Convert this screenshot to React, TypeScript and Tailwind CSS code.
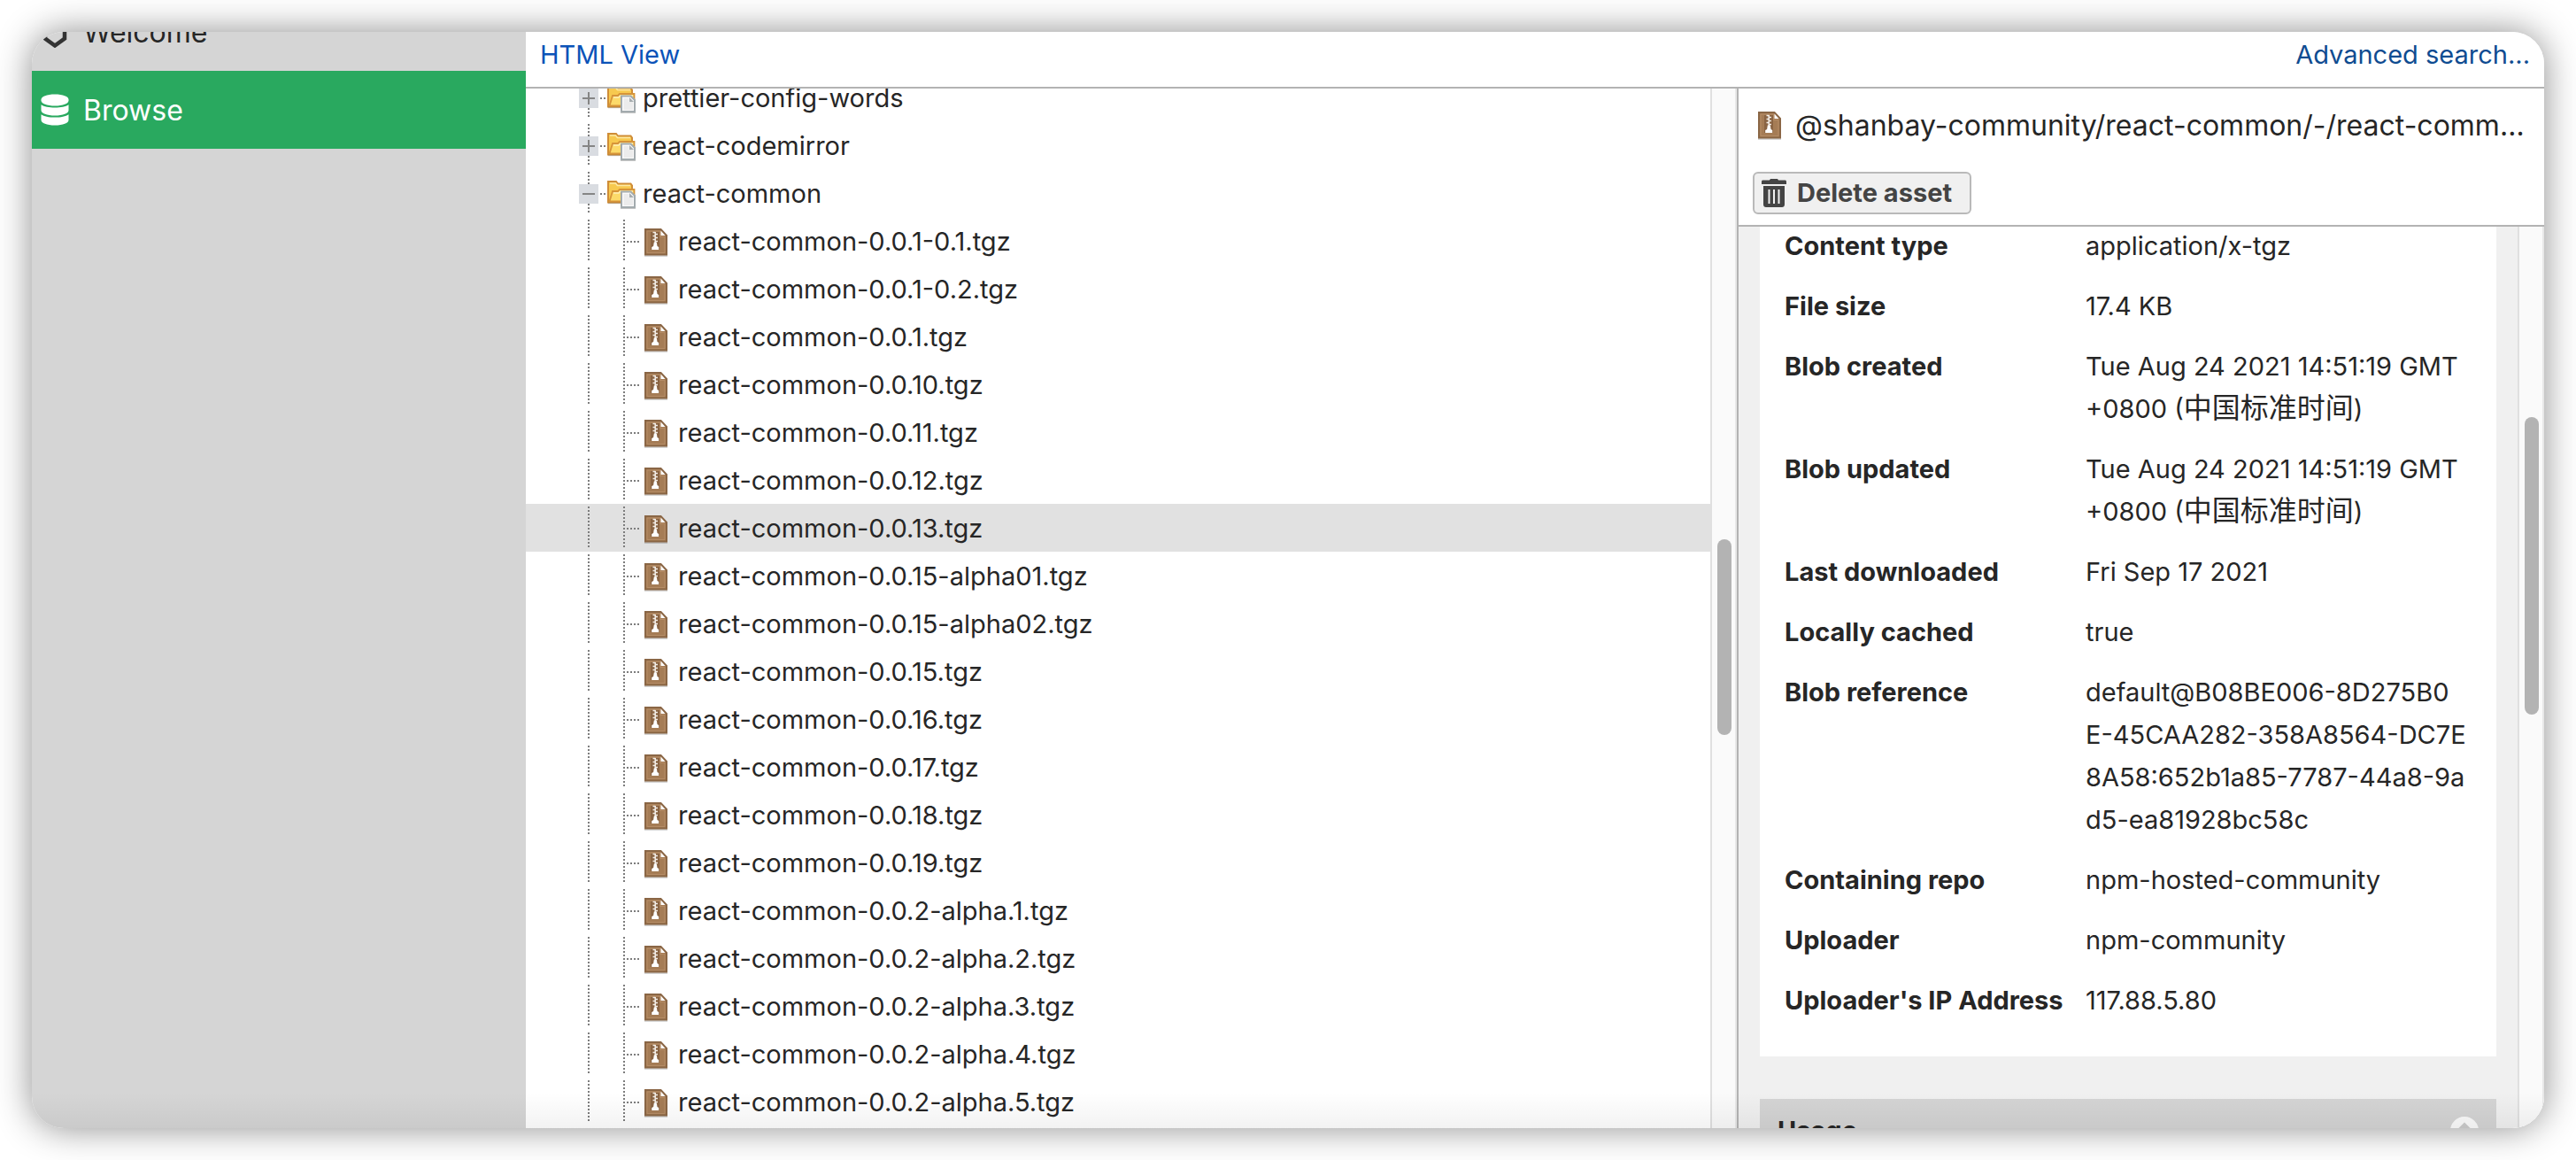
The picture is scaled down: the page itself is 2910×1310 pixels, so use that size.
import React, { useState } from "react";
import clsx from "clsx";

const folders = [
  { name: "prettier-config-words", open: false },
  { name: "react-codemirror", open: false },
  { name: "react-common", open: true },
];

const files = [
  "0.0.1-0.1",
  "0.0.1-0.2",
  "0.0.1",
  "0.0.10",
  "0.0.11",
  "0.0.12",
  "0.0.13",
  "0.0.15-alpha01",
  "0.0.15-alpha02",
  "0.0.15",
  "0.0.16",
  "0.0.17",
  "0.0.18",
  "0.0.19",
  "0.0.2-alpha.1",
  "0.0.2-alpha.2",
  "0.0.2-alpha.3",
  "0.0.2-alpha.4",
  "0.0.2-alpha.5",
].map((version) => `react-common-${version}.tgz`);

const timestamp = (
  <>
    <span className="block">Tue Aug 24 2021 14:51:19 GMT</span>
    <span className="block">
      +0800 (<span className="text-[32px] leading-none">中国标准时间</span>)
    </span>
  </>
);

const details: { label: string; value: React.ReactNode }[] = [
  { label: "Content type", value: "application/x-tgz" },
  { label: "File size", value: "17.4 KB" },
  { label: "Blob created", value: timestamp },
  { label: "Blob updated", value: timestamp },
  { label: "Last downloaded", value: "Fri Sep 17 2021" },
  { label: "Locally cached", value: "true" },
  {
    label: "Blob reference",
    value: (
      <>
        <span className="block">default@B08BE006-8D275B0</span>
        <span className="block">E-45CAA282-358A8564-DC7E</span>
        <span className="block">8A58:652b1a85-7787-44a8-9a</span>
        <span className="block">d5-ea81928bc58c</span>
      </>
    ),
  },
  { label: "Containing repo", value: "npm-hosted-community" },
  { label: "Uploader", value: "npm-community" },
  { label: "Uploader's IP Address", value: "117.88.5.80" },
];

function HexagonIcon() {
  return (
    <svg className="size-9" viewBox="0 0 36 36" fill="none" aria-hidden="true">
      <path d="M18 2.5 29 9.500v16L18 33.500 7 25.500v-16z" stroke="#333" strokeWidth="4.500" />
    </svg>
  );
}

function DatabaseIcon() {
  return (
    <svg className="size-9" viewBox="0 0 36 36" fill="#fff" aria-hidden="true">
      <path d="M2.500 6.500C2.500 3 9 .500 18 .500S33.500 3 33.500 6.500v1C33.500 11 27 13.500 18 13.500S2.500 11 2.500 7.500z" />
      <path d="M2.500 12.300C5.500 14.600 11.500 15.600 18 15.600s12.500-1 15.500-3.300v6.200c0 3.500-6.500 6-15.500 6s-15.500-2.500-15.500-6z" />
      <path d="M2.500 23.200c3 2.300 9 3.400 15.500 3.400s12.500-1.100 15.500-3.400v6.300c0 3.500-6.500 6-15.500 6s-15.500-2.500-15.500-6z" />
    </svg>
  );
}

function FolderIcon() {
  return (
    <svg className="mt-1 size-8 shrink-0" viewBox="0 0 32 32" fill="none" aria-hidden="true">
      <path d="M1 24.500V1h9l2 2.500h14.500l1.500 2V24.500z" fill="#f7c94f" stroke="#cf8d38" strokeWidth="2" />
      <path d="M3 3h6.500l2 2.500H26" stroke="#fde9a6" strokeWidth="1.500" />
      <path d="M2.500 23.500 6 12h6l2-2h16.500v13.500z" fill="#fcda6a" stroke="#d6943a" strokeWidth="1.800" />
      <path d="M7 14h6l2-2h14" stroke="#fff0b8" strokeWidth="1.500" />
      <path d="M1 25.500h16" stroke="#0000002e" strokeWidth="1.500" />
      <path d="M16 12.500h10.500l4.500 4.500v13H16z" fill="#fafafa" stroke="#a3abae" strokeWidth="2" />
      <path d="M18.500 15h6v4h4.500v9H18.500z" fill="#ececec" />
      <path d="M25 14v5h5z" fill="#a7adb0" />
      <path d="M15 31.500h17" stroke="#0000003a" />
    </svg>
  );
}

function ArchiveIcon() {
  return (
    <svg className="size-8 shrink-0" viewBox="0 0 32 32" fill="none" aria-hidden="true">
      <path d="M2 31h26" stroke="#00000038" strokeWidth="1.500" />
      <path d="M3 1h17.500l6.500 7v21.500H3z" fill="#a57c55" stroke="#8a6645" strokeWidth="2" />
      <path d="M5 3h14.500v6.500H25V27.500H5z" stroke="#b58c66" strokeWidth="1" />
      <path d="M9 4h10v20h-10z" fill="#8a6443" />
      <path
        d="M11.500 4.500h3M14 6.500h3M11.500 8.500h3M14 10.500h3M11.500 12.500h3M14 14.500h3"
        stroke="#f4eee8"
        strokeWidth="1.700"
      />
      <path d="M14.200 4v12" stroke="#f4eee8" strokeWidth="1.500" />
      <path d="M12.800 15.500h3l.7 4.500 1.700 1v3h-8v-3l1.900-1z" fill="#fff" />
      <path d="M20.500 2.500v5.500h5z" fill="#fff" />
    </svg>
  );
}

function TrashIcon() {
  return (
    <svg className="size-8 shrink-0" viewBox="0 0 32 32" fill="#444" aria-hidden="true">
      <path d="M11 1.500c.3-1 1-1.500 2-1.500h6c1 0 1.700.5 2 1.500h7.500c.8 0 1.500.6 1.500 1.500v3H2V3c0-.9.700-1.500 1.500-1.500z" />
      <path
        fillRule="evenodd"
        d="M4 8h24v21c0 1.700-1.300 3-3 3H7c-1.700 0-3-1.300-3-3zM9.500 12v16h2V12zM15 12v16h2V12zM20.500 12v16h2V12z"
      />
    </svg>
  );
}

function TreeLine({ branch = false }: { branch?: boolean }) {
  return (
    <svg className="h-[54px] w-10 shrink-0" viewBox="0 0 40 54" fill="none" stroke="#7d7d7d" strokeWidth="2" strokeDasharray="2 2" aria-hidden="true">
      <path d="M19 3v47" />
      {branch && <path d="M22 28h15" />}
    </svg>
  );
}

function ToggleGlyph({ open }: { open: boolean }) {
  return (
    <svg className="h-[54px] w-10" viewBox="0 0 40 54" fill="none" aria-hidden="true">
      <path d="M19 3v14M19 39v11M32 28h7" stroke="#7d7d7d" strokeWidth="2" strokeDasharray="2 2" />
      <path d="M8 17h22v22H8z" fill="#d9dce1" />
      <path d={open ? "M12 28h14" : "M12 28h14M19 21v14"} stroke="#858585" strokeWidth="2" />
    </svg>
  );
}

function Scrollbar({ thumb }: { thumb: string }) {
  return (
    <div className="w-[30px] shrink-0 border-x-2 border-l-[#e0e0e0] border-r-[#e8e8e8] bg-[#fafafa] px-1.5">
      <div className={clsx("w-4 -mr-1 rounded-full bg-[#b3b3b3]", thumb)} />
    </div>
  );
}

export default function App() {
  const [selected, setSelected] = useState("react-common-0.0.13.tgz");

  return (
    <div className="h-screen bg-white p-9 font-['Inter','Noto_Sans_CJK_SC',sans-serif] text-[29px] leading-[48px] text-[#262626]">
      <div className="relative flex h-full overflow-hidden rounded-[36px] shadow-[0_0_40px_rgba(0,0,0,0.45)]">
        <nav className="w-[558px] shrink-0 bg-[#d5d5d5] text-[32px]">
          <a href="#welcome" className="-mt-11 flex h-[88px] items-center gap-[14px] pl-2">
            <HexagonIcon />
            <span className="mt-0.5">Welcome</span>
          </a>
          <a href="#browse" className="flex h-[88px] items-center gap-[14px] bg-[#29a95f] pl-2 text-white">
            <DatabaseIcon />
            <span className="mt-0.5">Browse</span>
          </a>
        </nav>

        <div className="flex min-w-0 flex-1 flex-col bg-white">
          <header className="flex h-16 shrink-0 items-start justify-between border-b-2 border-[#b3b3b3] pt-0.5 pr-4 pl-4">
            <a href="#html" className="text-[#0b53b8]">HTML View</a>
            <a href="#search" className="text-[#0f4c91]">Advanced search...</a>
          </header>

          <div className="flex min-h-0 flex-1">
            <div className="min-w-0 flex-1 overflow-hidden">
              <ul className="-mt-[17px]">
                {folders.map((folder) => (
                  <li key={folder.name} className="flex h-[54px] items-center pl-[52px]">
                    <button type="button" aria-expanded={folder.open} aria-label={`Toggle ${folder.name}`}>
                      <ToggleGlyph open={folder.open} />
                    </button>
                    <FolderIcon />
                    <span className="mt-0.5 ml-2">{folder.name}</span>
                  </li>
                ))}
                {files.map((file) => (
                  <li key={file}>
                    <button
                      type="button"
                      onClick={() => setSelected(file)}
                      className={clsx("flex h-[54px] w-full items-center pl-[52px]", file === selected && "bg-[#e1e1e1]")}
                    >
                      <TreeLine />
                      <TreeLine branch />
                      <span className="mt-1">
                        <ArchiveIcon />
                      </span>
                      <span className="mt-0.5 ml-2">{file}</span>
                    </button>
                  </li>
                ))}
              </ul>
            </div>
            <Scrollbar thumb="mt-[509px] h-[221px]" />

            <aside className="flex w-[912px] shrink-0 flex-col border-l-2 border-[#b3b3b3]">
              <div className="border-b-2 border-[#b3b3b3] pb-3">
                <div className="flex h-[84px] items-center pr-4 pl-5">
                  <ArchiveIcon />
                  <h1 className="ml-3 min-w-0 truncate text-[32px]">
                    @shanbay-community/react-common/-/react-common-0.0.13.tgz
                  </h1>
                </div>
                <button
                  type="button"
                  className="mt-[10px] ml-4 flex h-12 items-center gap-2.5 rounded-md border-2 border-[#b9b9b9] bg-[#f0f0f0] pr-5 pl-1.5 font-bold text-[#444]"
                >
                  <TrashIcon />
                  Delete asset
                </button>
              </div>

              <div className="flex min-h-0 flex-1">
                <div className="min-w-0 flex-1 overflow-hidden bg-[#f0f0f0] px-6">
                  <section className="-mt-0.5 bg-white pb-[19px] pl-7">
                    <table className="w-full text-left">
                      <tbody>
                        {details.map((row) => (
                          <tr key={row.label} className="align-top">
                            <th scope="row" className="w-[340px] pb-5 font-bold whitespace-nowrap">{row.label}</th>
                            <td className="pb-5">{row.value}</td>
                          </tr>
                        ))}
                      </tbody>
                    </table>
                  </section>
                  <section className="mt-12 bg-[#d4d4d4]">
                    <div className="flex h-[72px] items-center justify-between pr-5 pl-5">
                      <h2 className="font-bold">Usage</h2>
                      <button type="button" aria-label="Collapse Usage">
                        <svg className="size-8" viewBox="0 0 32 32" fill="none" aria-hidden="true">
                          <circle cx="16" cy="16" r="16" fill="#fafafa" />
                          <path d="m8 18 8-8 8 8" stroke="#cacaca" strokeWidth="5" />
                        </svg>
                      </button>
                    </div>
                  </section>
                </div>
                <Scrollbar thumb="mt-[215px] h-[336px]" />
              </div>
            </aside>
          </div>
        </div>
        <div className="pointer-events-none absolute inset-x-0 bottom-0 h-10 bg-linear-to-t from-black/5 to-transparent" />
      </div>
    </div>
  );
}
